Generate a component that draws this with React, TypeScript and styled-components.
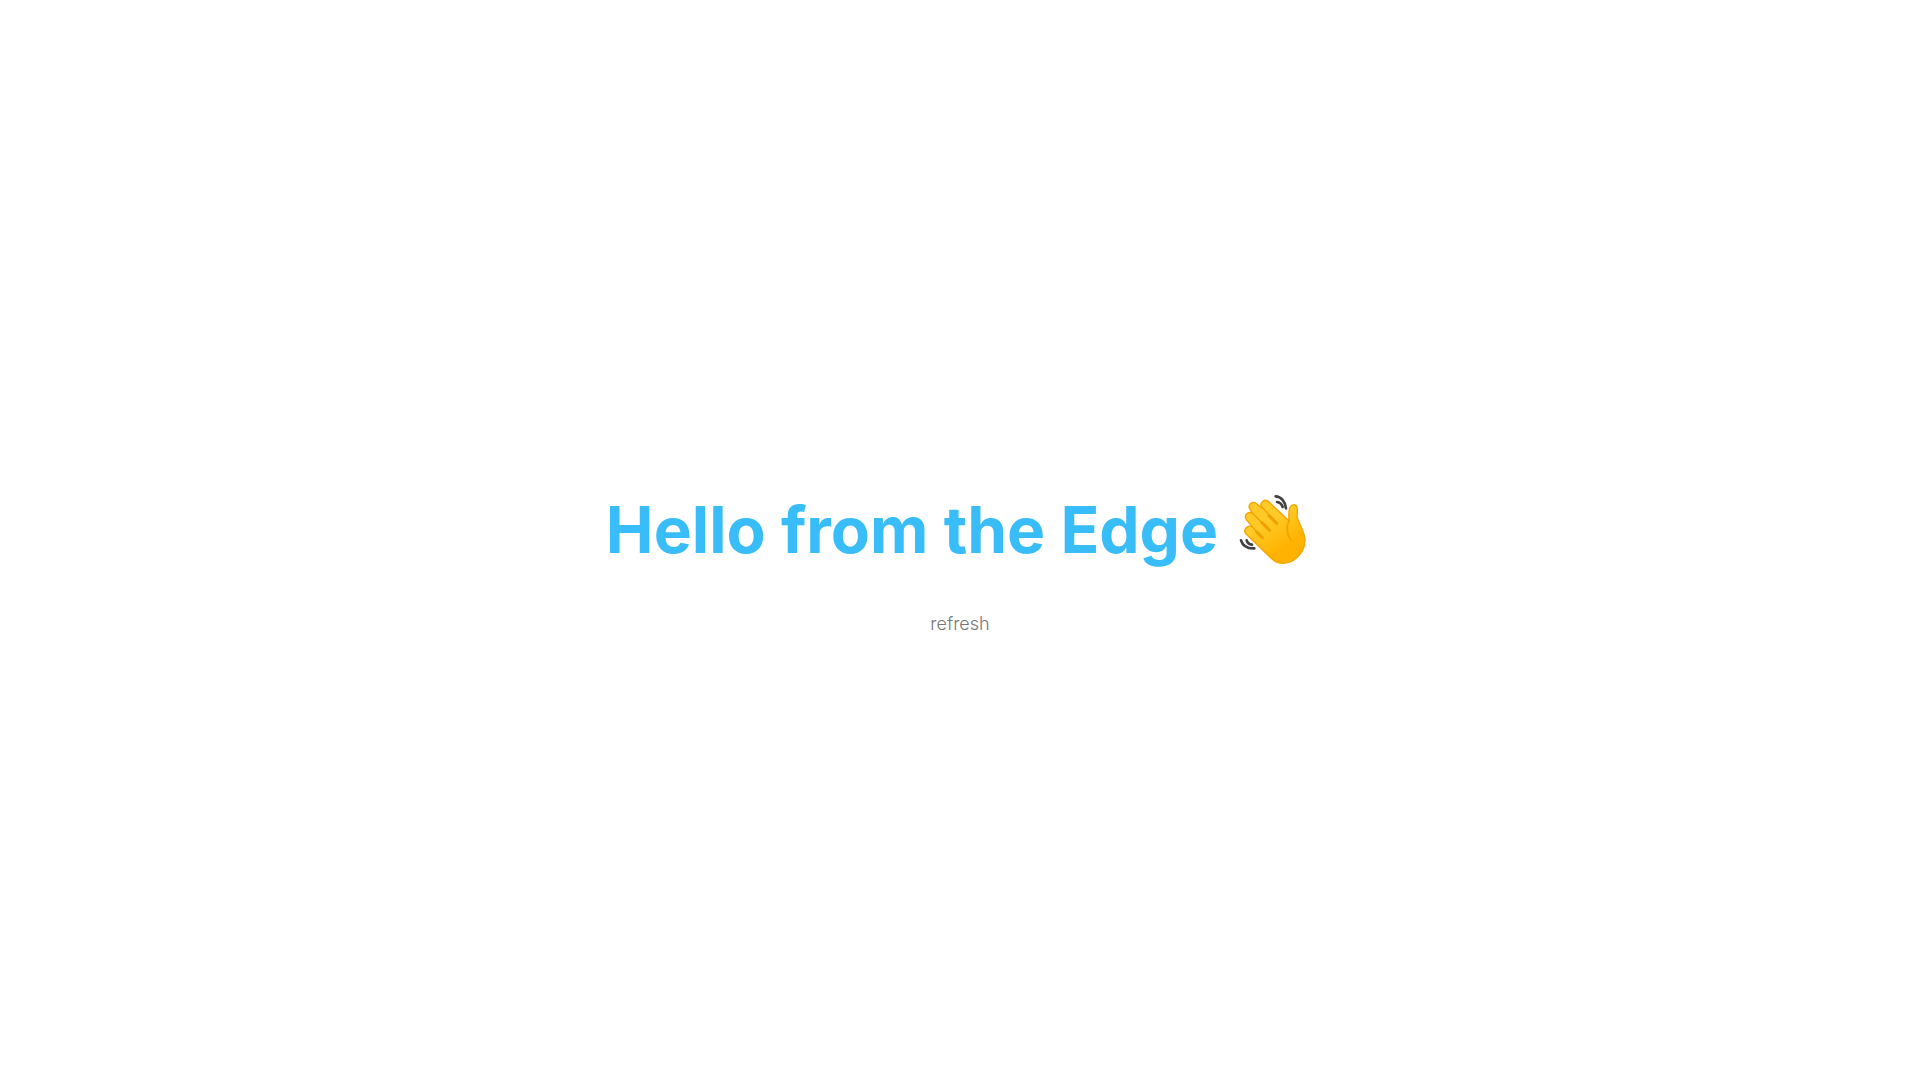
import React from "react";
import styled, { createGlobalStyle } from "styled-components";

const GlobalStyle = createGlobalStyle`
  body {
    margin: 0;
    background: #ffffff;
    font-family: Inter, "Liberation Sans", sans-serif;
  }
`;

const Page = styled.main`
  box-sizing: border-box;
  min-height: 100vh;
  padding-top: 48px;
  display: flex;
  flex-direction: column;
  align-items: center;
  justify-content: center;
`;

const Title = styled.h1`
  margin: 0;
  display: flex;
  align-items: center;
  gap: 20px;
  font-size: 64px;
  line-height: 80px;
  font-weight: 700;
  color: #38bdf8;
`;

const Wave = styled.svg`
  width: 76px;
  height: 80px;
  flex: none;
`;

const Refresh = styled.a`
  margin-top: 40px;
  font-size: 18px;
  line-height: 28px;
  font-weight: 300;
  color: #777777;
  text-decoration: none;
`;

function WavingHand() {
  return (
    <Wave viewBox="24 15 228 240" role="img" aria-label="Waving hand" fill="none" strokeLinecap="round" strokeLinejoin="round">
      <defs>
        <linearGradient id="skin" x1="80" y1="60" x2="185" y2="220" gradientUnits="userSpaceOnUse">
          <stop offset="0.3" stopColor="#ffca28" />
          <stop offset="0.8" stopColor="#ffb300" />
        </linearGradient>
      </defs>
      <path
        d="M49 148 L122 218 C141 237 165 240 190 226 C213 211 226 187 225 162 C223 139 207 116 202 98 C200 88 204 78 201 67 C198 56 184 57 179 69 C175 80 177 98 177 108 L117 51 C105 39 87 52 95 65 L99 71 L80 56 C67 46 51 59 60 73 L68 85 C53 77 40 92 50 105 L67 125 C51 119 37 136 49 148 Z"
        fill="url(#skin)"
        stroke="#f5a400"
        strokeWidth="4"
      />
      <g stroke="#f0a200">
        <path d="M96 66 L140 116 M64 81 L120 137 M63 122 L98 159" strokeWidth="4" />
        <path d="M117 92 L140 115 M96 113 L119 136 M80 141 L97 158" strokeWidth="9" />
        <path d="M178 107 C170 117 168 148 184 166" strokeWidth="5" />
      </g>
      <g stroke="#424242" strokeWidth="8">
        <path d="M137 34 C153 35 166 49 168 70" />
        <path d="M141 51 C149 52 155 57 158 66" />
        <path d="M33 166 C38 182 52 191 73 190" />
        <path d="M50 166 C52 173 58 178 66 179" />
      </g>
    </Wave>
  );
}

export default function App() {
  return (
    <Page>
      <GlobalStyle />
      <Title>
        Hello from the Edge
        <WavingHand />
      </Title>
      <Refresh href="/">refresh</Refresh>
    </Page>
  );
}
